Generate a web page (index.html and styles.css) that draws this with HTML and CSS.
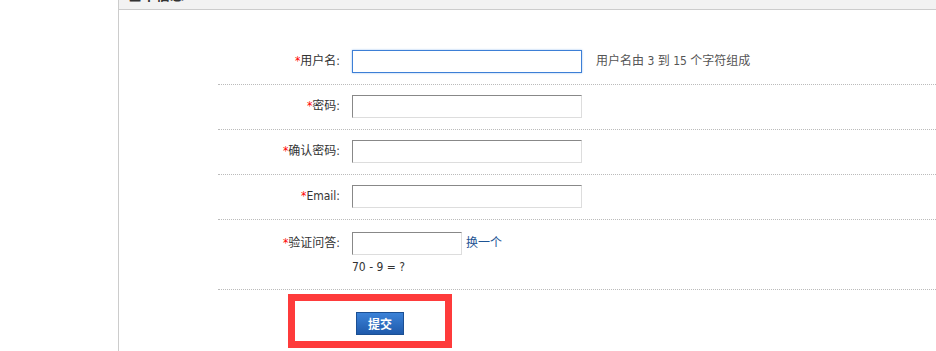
FILE: index.html
```html
<!DOCTYPE html>
<html lang="zh-CN">
<head>
    <meta charset="UTF-8">
    <title>用户注册</title>
    <link rel="stylesheet" href="styles.css">
</head>
<body>

    <div class="page">
        <div class="side"></div>

        <div class="main">
            <!-- box title, scrolled mostly out of view -->
            <div class="box-head">基本信息</div>

            <form class="reg-form">
                <div class="row">
                    <label class="label"><em>*</em>用户名:</label>
                    <div class="field">
                        <input type="text" class="txt focus">
                        <span class="tip">用户名由 3 到 15 个字符组成</span>
                    </div>
                </div>
                <div class="row">
                    <label class="label"><em>*</em>密码:</label>
                    <div class="field"><input type="password" class="txt"></div>
                </div>
                <div class="row">
                    <label class="label"><em>*</em>确认密码:</label>
                    <div class="field"><input type="password" class="txt"></div>
                </div>
                <div class="row">
                    <label class="label"><em>*</em>Email:</label>
                    <div class="field"><input type="text" class="txt"></div>
                </div>
                <div class="row row-secqaa">
                    <label class="label"><em>*</em>验证问答:</label>
                    <div class="field">
                        <div>
                            <input type="text" class="txt short">
                            <a href="#" class="change">换一个</a>
                        </div>
                        <div class="question">70 - 9 = ?</div>
                    </div>
                </div>
                <div class="row-submit">
                    <div class="mark">
                        <button type="button" class="btn">提交</button>
                    </div>
                </div>
            </form>
        </div>
    </div>

</body>
</html>
```

FILE: styles.css
```css
body {
    margin: 0;
    padding: 0;
    background: #fff;
    font-family: "DejaVu Sans Condensed", "Noto Sans CJK SC", sans-serif;
    font-size: 12px;
    color: #333;
}

.page {
    display: flex;
    height: 351px;
    overflow: hidden;
}

.side {
    width: 118px;
    flex-shrink: 0;
}

.main {
    flex: 1;
    border-left: 1px solid #ccc;
    min-width: 0;
}

.box-head {
    height: 29px;
    line-height: 30px;
    margin-top: -20px;
    padding-left: 9px;
    background: #f2f2f2;
    border-bottom: 1px solid #ccc;
    font-size: 14px;
    font-weight: bold;
    color: #333;
}

.reg-form {
    margin: 30px 0 0 99px;
}

.row {
    display: flex;
    height: 34px;
    padding-top: 10px;
    border-bottom: 1px dotted #bbb;
}

.label {
    width: 122px;
    padding-right: 12px;
    text-align: right;
    line-height: 23px;
    color: #333;
}

.label em {
    font-style: normal;
    color: #f00;
}

.field {
    display: flex;
    align-items: flex-start;
}

.txt {
    box-sizing: border-box;
    width: 230px;
    height: 23px;
    margin: 0;
    padding: 2px 4px;
    border: 1px solid #ddd;
    border-top-color: #888;
    border-left-color: #888;
    background: #fff;
    font-size: 12px;
}

.txt.focus {
    border: 1px solid #3d7fd6;
    box-shadow: 0 0 2px #9cc1ee;
}

.txt.short {
    width: 110px;
}

.tip {
    margin-left: 14px;
    line-height: 23px;
    color: #555;
}

.row-secqaa {
    height: 57px;
    padding-top: 12px;
}

.row-secqaa .field {
    flex-direction: column;
}

.row-secqaa .field > div:first-child {
    display: flex;
}

.change {
    margin-left: 4px;
    line-height: 23px;
    color: #1e5494;
    text-decoration: none;
}

.question {
    margin-top: 4px;
    line-height: 16px;
    color: #333;
}

.row-submit {
    padding: 4px 0 0 70px;
}

.mark {
    display: inline-block;
    width: 150px;
    height: 40px;
    border: 7px solid #fe3b3b;
    box-sizing: content-box;
}

.btn {
    display: block;
    width: 48px;
    height: 23px;
    margin: 11px 0 0 61px;
    padding: 0;
    border: 1px solid #1b4f93;
    background: linear-gradient(to bottom, #3b82d8, #1f5aab);
    color: #fff;
    font-family: "Noto Sans CJK SC", sans-serif;
    font-size: 12px;
    font-weight: bold;
    cursor: pointer;
}
```
